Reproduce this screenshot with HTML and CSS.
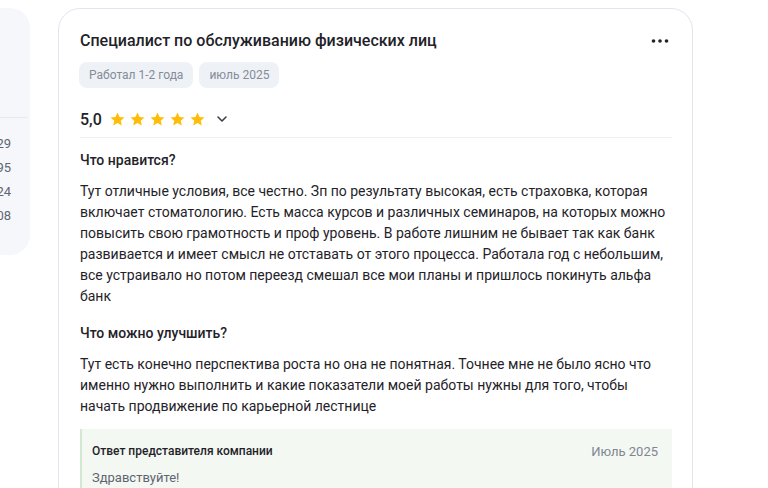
FILE: index.html
```html
<!DOCTYPE html>
<html lang="ru">
<head>
    <meta charset="UTF-8">
    <meta name="viewport" content="width=device-width, initial-scale=1.0">
    <title>Отзыв сотрудника</title>
    <link rel="stylesheet" href="styles.css">
</head>
<body>
    <div class="page">
        <aside class="side-panel">
            <div class="side-top"></div>
            <ul class="side-list">
                <li>29</li>
                <li>95</li>
                <li>24</li>
                <li>08</li>
            </ul>
        </aside>

        <article class="review-card">
            <div class="review-head">
                <h2 class="review-title">Специалист по обслуживанию физических лиц</h2>
                <button class="more-btn" aria-label="Ещё">
                    <svg width="18" height="6" viewBox="0 0 18 6">
                        <circle cx="2.5" cy="3" r="1.8" fill="#1f2329"/>
                        <circle cx="9" cy="3" r="1.8" fill="#1f2329"/>
                        <circle cx="15.5" cy="3" r="1.8" fill="#1f2329"/>
                    </svg>
                </button>
            </div>

            <div class="tags">
                <span class="tag">Работал 1-2 года</span>
                <span class="tag">июль 2025</span>
            </div>

            <div class="rating">
                <span class="rating-value">5,0</span>
                <div class="stars">
                    <svg viewBox="0 0 24 24"><path d="M12 2.2l2.9 6.3 6.9.7-5.2 4.6 1.5 6.8L12 17.1l-6.1 3.5 1.5-6.8-5.2-4.6 6.9-.7z"/></svg>
                    <svg viewBox="0 0 24 24"><path d="M12 2.2l2.9 6.3 6.9.7-5.2 4.6 1.5 6.8L12 17.1l-6.1 3.5 1.5-6.8-5.2-4.6 6.9-.7z"/></svg>
                    <svg viewBox="0 0 24 24"><path d="M12 2.2l2.9 6.3 6.9.7-5.2 4.6 1.5 6.8L12 17.1l-6.1 3.5 1.5-6.8-5.2-4.6 6.9-.7z"/></svg>
                    <svg viewBox="0 0 24 24"><path d="M12 2.2l2.9 6.3 6.9.7-5.2 4.6 1.5 6.8L12 17.1l-6.1 3.5 1.5-6.8-5.2-4.6 6.9-.7z"/></svg>
                    <svg viewBox="0 0 24 24"><path d="M12 2.2l2.9 6.3 6.9.7-5.2 4.6 1.5 6.8L12 17.1l-6.1 3.5 1.5-6.8-5.2-4.6 6.9-.7z"/></svg>
                </div>
                <svg class="chevron" width="12" height="8" viewBox="0 0 12 8">
                    <path d="M2 2l4 4 4-4" fill="none" stroke="#3a3f47" stroke-width="1.6" stroke-linecap="round" stroke-linejoin="round"/>
                </svg>
            </div>

            <div class="review-body">
                <section class="block">
                    <h3>Что нравится?</h3>
                    <p>Тут отличные условия, все честно. Зп по результату высокая, есть страховка, которая включает стоматологию. Есть масса курсов и различных семинаров, на которых можно повысить свою грамотность и проф уровень. В работе лишним не бывает так как банк развивается и имеет смысл не отставать от этого процесса. Работала год с небольшим, все устраивало но потом переезд смешал все мои планы и пришлось покинуть альфа банк</p>
                </section>

                <section class="block">
                    <h3>Что можно улучшить?</h3>
                    <p>Тут есть конечно перспектива роста но она не понятная. Точнее мне не было ясно что именно нужно выполнить и какие показатели моей работы нужны для того, чтобы начать продвижение по карьерной лестнице</p>
                </section>

                <div class="answer">
                    <div class="answer-head">
                        <span class="answer-title">Ответ представителя компании</span>
                        <span class="answer-date">Июль 2025</span>
                    </div>
                    <p class="answer-text">Здравствуйте!</p>
                </div>
            </div>
        </article>
    </div>
</body>
</html>
```

FILE: styles.css
```css
* {
    margin: 0;
    padding: 0;
    box-sizing: border-box;
}

body {
    font-family: Roboto, 'Liberation Sans', sans-serif;
    background: #fff;
    color: #1f2329;
    height: 488px;
    overflow: hidden;
}

.page {
    display: flex;
    align-items: flex-start;
    gap: 28px;
    padding-top: 8px;
    margin-left: -200px;
}

/* левая колонка, видна только краем */
.side-panel {
    width: 230px;
    height: 247px;
    background: #f6f7fa;
    border-radius: 0 20px 20px 0;
    padding-right: 20px;
    flex-shrink: 0;
}

.side-top {
    height: 110px;
    border-bottom: 1px solid #e6e8ee;
    margin-right: -17px;
}

.side-list {
    list-style: none;
    padding-top: 14px;
    text-align: right;
    margin-right: -10px;
    transform: translateX(-9px);
}

.side-list li {
    font-size: 13px;
    font-weight: 400;
    color: #5f6672;
    line-height: 24px;
}

.review-card {
    width: 635px;
    height: 520px;
    border: 1px solid #e1e5ee;
    border-radius: 22px;
    padding: 19px 20px 0 21px;
    flex-shrink: 0;
}

.review-head {
    display: flex;
    justify-content: space-between;
    align-items: center;
    height: 26px;
}

.review-title {
    font-size: 16px;
    font-weight: 500;
    line-height: 26px;
    color: #1f2329;
}

.more-btn {
    border: none;
    background: none;
    cursor: pointer;
    display: flex;
    align-items: center;
    padding: 0;
    margin-right: 3px;
}

.tags {
    display: flex;
    gap: 6px;
    margin-top: 8px;
    margin-left: -1px;
}

.tag {
    background: #eef1f6;
    color: #858c99;
    font-size: 12px;
    line-height: 26px;
    padding: 0 10px;
    border-radius: 8px;
}

.rating {
    display: flex;
    align-items: center;
    margin-top: 19px;
    height: 24px;
}

.rating-value {
    font-size: 16px;
    font-weight: 500;
    margin-right: 7px;
}

.stars {
    display: flex;
    gap: 3px;
}

.stars svg {
    width: 17px;
    height: 17px;
    fill: #ffbd0a;
}

.chevron {
    margin-left: 10px;
}

.review-body {
    margin-top: 6px;
    border-top: 1px solid #eceef2;
    width: 592px;
}

.block {
    margin-top: 12px;
}

.block + .block {
    margin-top: 16px;
}

.block h3 {
    font-size: 14px;
    font-weight: 500;
    line-height: 20px;
    margin-bottom: 11px;
}

.block p {
    font-size: 14px;
    line-height: 21px;
    color: #1f2329;
}

.answer {
    margin-top: 12px;
    background: #f3f8f3;
    border-left: 2px solid #d3e8d3;
    padding: 13px 14px 0 10px;
    height: 80px;
}

.answer-head {
    display: flex;
    justify-content: space-between;
    align-items: center;
}

.answer-title {
    font-size: 12px;
    font-weight: 500;
    line-height: 18px;
}

.answer-date {
    font-size: 13px;
    color: #808690;
}

.answer-text {
    margin-top: 9px;
    font-size: 13px;
    line-height: 18px;
    color: #5f656f;
}
```
